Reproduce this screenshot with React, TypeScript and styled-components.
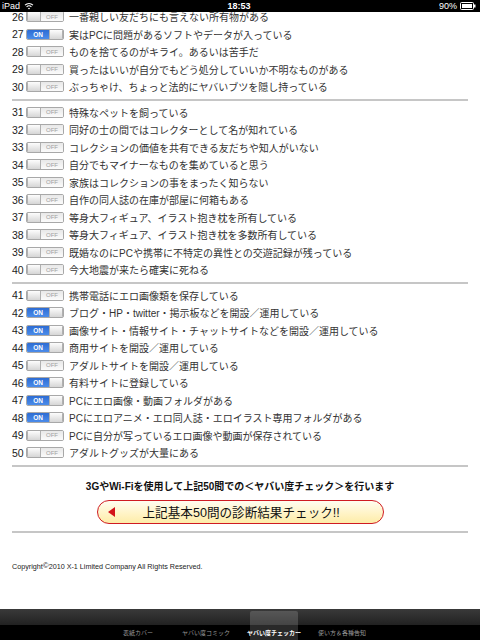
import React, { FC } from "react";
import styled, { createGlobalStyle } from "styled-components";

const GlobalStyle = createGlobalStyle`
  html, body {
    margin: 0;
    padding: 0;
    background: #ffffff;
  }
  body {
    font-family: "Liberation Sans", "Noto Sans CJK JP", sans-serif;
  }
`;

type Item = { no: number; text: string; on: boolean };

const groups: Item[][] = [
  [
    { no: 26, on: false, text: "一番親しい友だちにも言えない所有物がある" },
    { no: 27, on: true, text: "実はPCに問題があるソフトやデータが入っている" },
    { no: 28, on: false, text: "ものを捨てるのがキライ。あるいは苦手だ" },
    { no: 29, on: false, text: "買ったはいいが自分でもどう処分していいか不明なものがある" },
    { no: 30, on: false, text: "ぶっちゃけ、ちょっと法的にヤバいブツを隠し持っている" },
  ],
  [
    { no: 31, on: false, text: "特殊なペットを飼っている" },
    { no: 32, on: false, text: "同好の士の間ではコレクターとして名が知れている" },
    { no: 33, on: false, text: "コレクションの価値を共有できる友だちや知人がいない" },
    { no: 34, on: false, text: "自分でもマイナーなものを集めていると思う" },
    { no: 35, on: false, text: "家族はコレクションの事をまったく知らない" },
    { no: 36, on: false, text: "自作の同人誌の在庫が部屋に何箱もある" },
    { no: 37, on: false, text: "等身大フィギュア、イラスト抱き枕を所有している" },
    { no: 38, on: false, text: "等身大フィギュア、イラスト抱き枕を多数所有している" },
    { no: 39, on: false, text: "既婚なのにPCや携帯に不特定の異性との交遊記録が残っている" },
    { no: 40, on: false, text: "今大地震が来たら確実に死ねる" },
  ],
  [
    { no: 41, on: false, text: "携帯電話にエロ画像類を保存している" },
    { no: 42, on: true, text: "ブログ・HP・twitter・掲示板などを開設／運用している" },
    { no: 43, on: true, text: "画像サイト・情報サイト・チャットサイトなどを開設／運用している" },
    { no: 44, on: true, text: "商用サイトを開設／運用している" },
    { no: 45, on: false, text: "アダルトサイトを開設／運用している" },
    { no: 46, on: true, text: "有料サイトに登録している" },
    { no: 47, on: true, text: "PCにエロ画像・動画フォルダがある" },
    { no: 48, on: true, text: "PCにエロアニメ・エロ同人誌・エロイラスト専用フォルダがある" },
    { no: 49, on: false, text: "PCに自分が写っているエロ画像や動画が保存されている" },
    { no: 50, on: false, text: "アダルトグッズが大量にある" },
  ],
];

const tabs = ["表紙カバー", "ヤバい度コミック", "ヤバい度チェッカー", "使い方＆各種告知"];

const Screen = styled.div`
  width: 480px;
  height: 640px;
  display: flex;
  flex-direction: column;
  overflow: hidden;
`;

const StatusBar = styled.div`
  height: 12px;
  flex: none;
  background: #000;
  color: #fff;
  display: grid;
  grid-template-columns: 1fr auto 1fr;
  align-items: center;
  padding: 0 4px 0 2px;
  font-size: 9px;
  position: relative;
  z-index: 1;
`;

const StatusLeft = styled.div`
  display: flex;
  align-items: center;
  gap: 4px;
`;

const StatusRight = styled.div`
  display: flex;
  align-items: center;
  justify-content: flex-end;
  gap: 3px;
`;

const Clock = styled.div`
  font-weight: bold;
`;

const Main = styled.div`
  flex: 1;
  overflow: hidden;
  padding: 0 12px;
`;

const List = styled.div`
  margin-top: -4px;
`;

const Row = styled.div`
  height: 17.5px;
  display: flex;
  align-items: center;
`;

const Num = styled.span`
  width: 13px;
  font-size: 10.5px;
  color: #222;
  flex: none;
`;

const Toggle = styled.span`
  width: 38px;
  height: 11px;
  margin-left: 1px;
  flex: none;
  display: flex;
  border: 1px solid #a8a8a8;
  border-radius: 2px;
  overflow: hidden;
  box-sizing: border-box;
`;

const OnPart = styled.span`
  flex: 1;
  background: linear-gradient(#2d6cd3, #4b8cea);
  color: #fff;
  font-size: 6.5px;
  font-weight: bold;
  display: flex;
  align-items: center;
  justify-content: center;
`;

const OffPart = styled.span`
  flex: 1;
  background: linear-gradient(#e8e8e8, #fbfbfb);
  color: #a0a0a0;
  font-size: 6px;
  display: flex;
  align-items: center;
  justify-content: center;
`;

const Knob = styled.span`
  width: 14px;
  flex: none;
  background: linear-gradient(#fdfdfd, #d6d6d6);
  border-left: 1px solid #b0b0b0;
  border-right: 1px solid #b0b0b0;
  box-sizing: border-box;
`;

const Label = styled.span`
  margin-left: 5px;
  font-size: 10px;
  color: #333;
  white-space: nowrap;
`;

const Divider = styled.div`
  height: 2px;
  background: #c6c6c6;
  margin: 3px 0;
`;

const Notice = styled.div`
  margin-top: 13px;
  text-align: center;
  font-size: 10px;
  font-weight: bold;
  color: #111;
  line-height: 14px;
`;

const CheckButton = styled.div`
  width: 287px;
  height: 24px;
  margin: 6px auto 0;
  box-sizing: border-box;
  border: 1.5px solid #cf1b22;
  border-radius: 12px;
  background: linear-gradient(#fffdf0, #fff3c4 60%, #fdeca8);
  display: flex;
  align-items: center;
  padding-left: 10px;
  font-size: 12.6px;
  color: #111;
`;

const Arrow = styled.span`
  width: 0;
  height: 0;
  border-top: 5px solid transparent;
  border-bottom: 5px solid transparent;
  border-right: 7px solid #d3121a;
  margin-right: 28px;
`;

const BottomDivider = styled(Divider)`
  margin-top: 7px;
`;

const Copyright = styled.div`
  margin-top: 28px;
  font-size: 7.2px;
  color: #222;
`;

const Copy = styled.sup`
  font-size: 8px;
  vertical-align: 1px;
`;

const TabBar = styled.div`
  height: 31px;
  flex: none;
  background: linear-gradient(#3a3a3a 0, #222 50%, #000 52%, #000);
  display: flex;
  justify-content: center;
`;

const Tab = styled.div<{ $active: boolean }>`
  width: 68px;
  display: flex;
  align-items: flex-end;
  justify-content: center;
  padding-bottom: 3px;
  box-sizing: border-box;
  font-size: 6px;
  color: ${(p) => (p.$active ? "#fff" : "#9a9a9a")};
  font-weight: ${(p) => (p.$active ? "bold" : "normal")};
  position: relative;
`;

const TabHighlight = styled.span`
  position: absolute;
  top: 2px;
  bottom: 0;
  left: 10px;
  right: 10px;
  background: rgba(255, 255, 255, 0.16);
  border-radius: 2px 2px 0 0;
`;

const TabText = styled.span`
  position: relative;
  white-space: nowrap;
`;

const Wifi: FC = () => (
  <svg width="10" height="8" viewBox="0 0 10 8">
    <path d="M1 3.2 A6 6 0 0 1 9 3.2" stroke="#fff" strokeWidth="1.1" fill="none" />
    <path d="M2.6 4.8 A3.6 3.6 0 0 1 7.4 4.8" stroke="#fff" strokeWidth="1.1" fill="none" />
    <path d="M5 7.6 L3.9 6.3 A1.6 1.6 0 0 1 6.1 6.3 Z" fill="#fff" />
  </svg>
);

const Battery: FC = () => (
  <svg width="16" height="8" viewBox="0 0 16 8">
    <rect x="0.5" y="0.5" width="13" height="7" rx="1" stroke="#fff" fill="none" />
    <rect x="2" y="2" width="10" height="4" fill="#fff" />
    <rect x="14" y="2.5" width="1.5" height="3" fill="#fff" />
  </svg>
);

const Switch: FC<{ on: boolean }> = ({ on }) =>
  on ? (
    <Toggle>
      <OnPart>ON</OnPart>
      <Knob />
    </Toggle>
  ) : (
    <Toggle>
      <Knob />
      <OffPart>OFF</OffPart>
    </Toggle>
  );

const App: FC = () => (
  <>
    <GlobalStyle />
    <Screen>
      <StatusBar>
        <StatusLeft>
          <span>iPad</span>
          <Wifi />
        </StatusLeft>
        <Clock>18:53</Clock>
        <StatusRight>
          <span>90%</span>
          <Battery />
        </StatusRight>
      </StatusBar>
      <Main>
        <List>
          {groups.map((group, gi) => (
            <React.Fragment key={gi}>
              {gi > 0 && <Divider />}
              {group.map((item) => (
                <Row key={item.no}>
                  <Num>{item.no}</Num>
                  <Switch on={item.on} />
                  <Label>{item.text}</Label>
                </Row>
              ))}
            </React.Fragment>
          ))}
          <Divider />
        </List>
        <Notice>3GやWi-Fiを使用して上記50問での＜ヤバい度チェック＞を行います</Notice>
        <CheckButton>
          <Arrow />
          上記基本50問の診断結果チェック!!
        </CheckButton>
        <BottomDivider />
        <Copyright>
          Copyright<Copy>©</Copy>2010 X-1 Limited Company All Rights Reserved.
        </Copyright>
      </Main>
      <TabBar>
        {tabs.map((t, i) => (
          <Tab key={t} $active={i === 2}>
            {i === 2 && <TabHighlight />}
            <TabText>{t}</TabText>
          </Tab>
        ))}
      </TabBar>
    </Screen>
  </>
);

export default App;
